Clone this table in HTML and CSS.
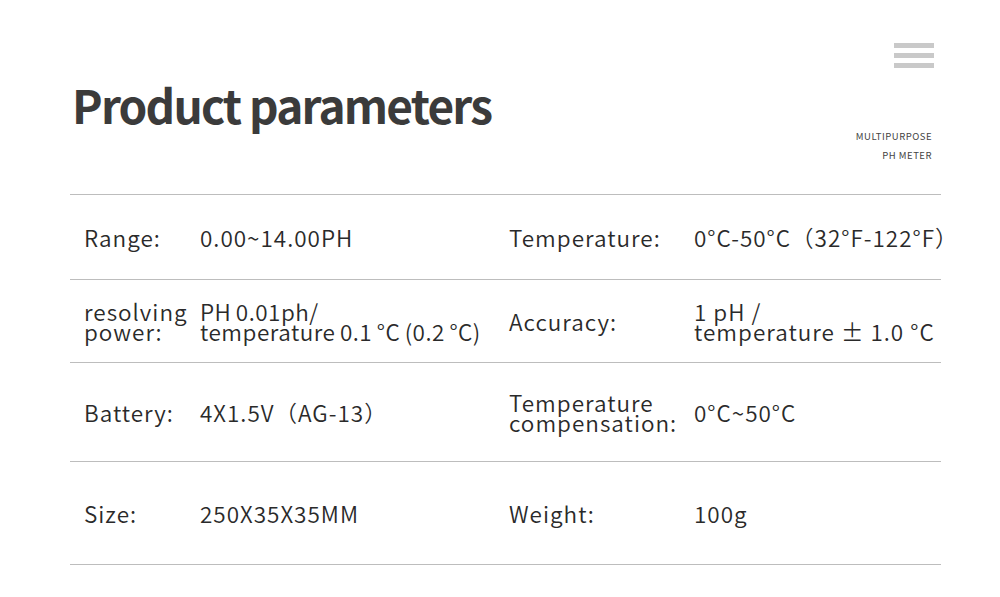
FILE: index.html
```html
<!DOCTYPE html>
<html>
<head>
<meta charset="utf-8">
<link rel="stylesheet" href="styles.css">
</head>
<body>
<div class="page">
  <header class="head">
    <h1 class="title">Product parameters</h1>
    <div class="side">
      <div class="menu"><span></span><span></span><span></span></div>
      <div class="tag">MULTIPURPOSE<br>PH METER</div>
    </div>
  </header>
  <div class="table">
    <div class="row r1">
      <div class="lab">Range:</div>
      <div class="val">0.00~14.00PH</div>
      <div class="lab2">Temperature:</div>
      <div class="val2">0°C-50°C（32°F-122°F）</div>
    </div>
    <div class="row r2">
      <div class="lab">resolving<br>power:</div>
      <div class="val tight">PH 0.01ph/<br>temperature 0.1 °C (0.2 °C)</div>
      <div class="lab2">Accuracy:</div>
      <div class="val2">1 pH /<br>temperature ± 1.0 °C</div>
    </div>
    <div class="row r3">
      <div class="lab">Battery:</div>
      <div class="val">4X1.5V（AG-13）</div>
      <div class="lab2">Temperature<br>compensation:</div>
      <div class="val2">0°C~50°C</div>
    </div>
    <div class="row r4">
      <div class="lab">Size:</div>
      <div class="val">250X35X35MM</div>
      <div class="lab2">Weight:</div>
      <div class="val2">100g</div>
    </div>
  </div>
</div>
</body>
</html>
```
FILE: styles.css
```css
html, body {
  margin: 0;
  padding: 0;
  background: #fff;
}
body {
  font-family: "Noto Sans CJK SC", "Noto Sans", sans-serif;
  color: #2a2a2a;
}
.page {
  width: 871px;
  margin-left: 70px;
}
.head {
  display: flex;
  justify-content: space-between;
  height: 195px;
  border-bottom: 1px solid #bdbdbd;
  box-sizing: border-box;
}
.title {
  margin: 81px 0 0 2px;
  font-size: 46px;
  line-height: 1;
  font-weight: 700;
  letter-spacing: -1.8px;
  color: #3b3b3b;
}
.side {
  display: flex;
  flex-direction: column;
  align-items: flex-end;
  padding-right: 7px;
}
.menu {
  margin-top: 43px;
  display: flex;
  flex-direction: column;
  gap: 5px;
}
.menu span {
  display: block;
  width: 40px;
  height: 5px;
  background: #c9c9c9;
}
.tag {
  margin-top: 59px;
  margin-right: 2px;
  font-size: 9.5px;
  line-height: 19px;
  text-align: right;
  color: #444;
  letter-spacing: 0.5px;
}
.row {
  display: grid;
  grid-template-columns: 116px 309px 185px 1fr;
  align-items: center;
  padding-left: 14px;
  border-bottom: 1px solid #bdbdbd;
  font-size: 22.5px;
  font-weight: 350;
  letter-spacing: 1px;
  line-height: 20.5px;
}
.r1 { height: 84px; }
.r2 { height: 82px; }
.r3 { height: 98px; }
.r4 { height: 102px; }
.row > div { white-space: nowrap; }
.tight { letter-spacing: 0.5px; word-spacing: -1px; }
```
